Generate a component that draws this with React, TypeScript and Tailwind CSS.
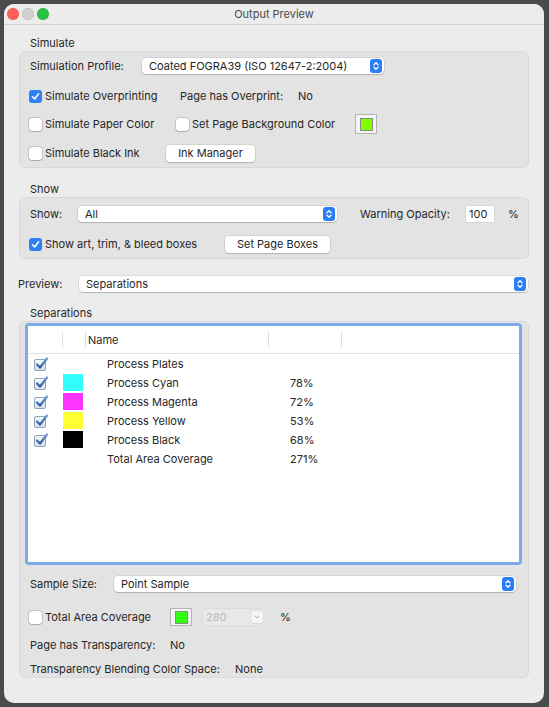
import React from "react";

const Stepper = () => (
  <span className="ml-auto mr-[2px] flex h-[14px] w-[12px] items-center justify-center rounded-[3px] bg-[#2b7ef6]">
    <svg width="8" height="10" viewBox="0 0 8 10" fill="none">
      <path d="M2 3.8 L4 1.8 L6 3.8" stroke="white" strokeWidth="1.3" strokeLinecap="round" strokeLinejoin="round" />
      <path d="M2 6.2 L4 8.2 L6 6.2" stroke="white" strokeWidth="1.3" strokeLinecap="round" strokeLinejoin="round" />
    </svg>
  </span>
);

const Popup = ({ label, className }: { label: string; className?: string }) => (
  <div
    className={
      "flex h-[16px] items-center rounded-[4px] bg-white pl-[7px] shadow-[0_0_0_0.5px_rgba(0,0,0,0.14),0_1px_1px_rgba(0,0,0,0.16)] " +
      (className || "")
    }
  >
    <span>{label}</span>
    <Stepper />
  </div>
);

const Button = ({ label, className }: { label: string; className?: string }) => (
  <div
    className={
      "flex h-[17px] items-center justify-center rounded-[4px] bg-white shadow-[0_0_0_0.5px_rgba(0,0,0,0.14),0_1px_1px_rgba(0,0,0,0.16)] " +
      (className || "")
    }
  >
    {label}
  </div>
);

const Checkbox = ({ checked }: { checked?: boolean }) =>
  checked ? (
    <span className="-ml-[1px] flex h-[13px] w-[13px] shrink-0 items-center justify-center rounded-[3px] bg-[#2f7ff6]">
      <svg width="9" height="9" viewBox="0 0 9 9" fill="none">
        <path d="M1.5 4.8 L3.6 7 L7.6 1.8" stroke="white" strokeWidth="1.6" strokeLinecap="round" strokeLinejoin="round" />
      </svg>
    </span>
  ) : (
    <span className="-ml-[1px] h-[13px] w-[13px] shrink-0 rounded-[3px] bg-white shadow-[0_0_0_0.5px_rgba(0,0,0,0.25),0_0.5px_1px_rgba(0,0,0,0.15)]" />
  );

const CheckLabel = ({ checked, label, className }: { checked?: boolean; label: string; className?: string }) => (
  <div className={"flex items-center gap-[3px] " + (className || "")}>
    <Checkbox checked={checked} />
    <span>{label}</span>
  </div>
);

const ColorWell = ({ color, className }: { color: string; className?: string }) => (
  <div className={"flex items-center justify-center border border-[#b4b4b4] bg-[#f4f4f4] " + (className || "")}>
    <div className="h-[13px] w-[13px] border border-[#8a8a8a]" style={{ background: color }} />
  </div>
);

const ListCheck = () => (
  <svg width="15" height="15" viewBox="0 0 15 15" fill="none">
    <defs>
      <linearGradient id="lc" x1="0" y1="0" x2="0" y2="1">
        <stop offset="0" stopColor="#f7f9fc" />
        <stop offset="1" stopColor="#d6dfea" />
      </linearGradient>
      <linearGradient id="lk" x1="0" y1="0" x2="0" y2="1">
        <stop offset="0" stopColor="#6a9ad6" />
        <stop offset="1" stopColor="#2b5a98" />
      </linearGradient>
    </defs>
    <rect x="0.5" y="3.5" width="11" height="11" rx="1.5" fill="url(#lc)" stroke="#8ea2bb" />
    <path d="M3 8.5 L6 11.5 L13 2.5" stroke="url(#lk)" strokeWidth="2.2" strokeLinecap="round" strokeLinejoin="round" />
  </svg>
);

const rows = [
  { name: "Process Plates", color: "", pct: "", check: true },
  { name: "Process Cyan", color: "#33ffff", pct: "78%", check: true },
  { name: "Process Magenta", color: "#ff33ff", pct: "72%", check: true },
  { name: "Process Yellow", color: "#ffff33", pct: "53%", check: true },
  { name: "Process Black", color: "#000000", pct: "68%", check: true },
  { name: "Total Area Coverage", color: "", pct: "271%", check: false },
];

export default function App() {
  return (
    <div className="h-[707px] w-[549px] bg-[#4b4b4b] pl-[4px] pt-[4px] font-[Inter,sans-serif] text-[11px] leading-[16px] text-[#262626]">
      <div className="flex h-[699px] w-[540px] flex-col overflow-hidden rounded-[10px] bg-[#ececec]">
        {/* Title bar */}
        <div className="grid h-[21px] shrink-0 grid-cols-[1fr_auto_1fr] items-center border-b border-[#d3d3d3] bg-[#ececec]">
          <div className="flex items-center gap-[3px] pl-[3px]">
            <span className="h-[12px] w-[12px] rounded-full bg-[#fe5f57] shadow-[inset_0_0_0_0.5px_rgba(0,0,0,0.15)]" />
            <span className="h-[12px] w-[12px] rounded-full bg-[#cfcfcf] shadow-[inset_0_0_0_0.5px_rgba(0,0,0,0.12)]" />
            <span className="h-[12px] w-[12px] rounded-full bg-[#29c13f] shadow-[inset_0_0_0_0.5px_rgba(0,0,0,0.15)]" />
          </div>
          <div className="text-[#4b4b4b]">Output Preview</div>
          <div />
        </div>

        <div className="px-[15px]">
          {/* Simulate */}
          <div className="mt-[10px] h-[16px] pl-[11px]">Simulate</div>
          <div className="rounded-[6px] border border-[#d9d9d9] bg-[#e3e3e3] pb-[5px] pl-[10px] pt-[5px]">
            <div className="flex h-[18px] items-center">
              <span className="w-[112px]">Simulation Profile:</span>
              <Popup label="Coated FOGRA39 (ISO 12647-2:2004)" className="w-[242px]" />
            </div>
            <div className="mt-[12px] flex h-[18px] items-center">
              <CheckLabel checked label="Simulate Overprinting" className="w-[150px]" />
              <span className="w-[118px]">Page has Overprint:</span>
              <span>No</span>
            </div>
            <div className="mt-[9px] flex h-[20px] items-center">
              <CheckLabel label="Simulate Paper Color" className="w-[147px]" />
              <CheckLabel label="Set Page Background Color" className="w-[178px]" />
              <ColorWell color="#80ff00" className="h-[20px] w-[22px]" />
            </div>
            <div className="mt-[10px] flex h-[18px] items-center">
              <CheckLabel label="Simulate Black Ink" className="w-[136px]" />
              <Button label="Ink Manager" className="w-[89px]" />
            </div>
          </div>

          {/* Show */}
          <div className="mt-[13px] h-[16px] pl-[11px]">Show</div>
          <div className="rounded-[6px] border border-[#d9d9d9] bg-[#e3e3e3] pb-[5px] pl-[10px] pt-[7px]">
            <div className="flex h-[18px] items-center">
              <span className="w-[48px]">Show:</span>
              <Popup label="All" className="w-[259px]" />
              <span className="ml-[23px] w-[106px]">Warning Opacity:</span>
              <div className="flex h-[16px] w-[28px] items-center bg-white pl-[3px] shadow-[0_0_0_0.5px_rgba(0,0,0,0.12)]">100</div>
              <span className="ml-[14px]">%</span>
            </div>
            <div className="mt-[12px] flex h-[18px] items-center">
              <CheckLabel checked label="Show art, trim, & bleed boxes" className="w-[195px]" />
              <Button label="Set Page Boxes" className="w-[105px]" />
            </div>
          </div>

          {/* Preview */}
          <div className="-ml-[1px] mt-[16px] flex h-[18px] items-center">
            <span className="w-[61px]">Preview:</span>
            <Popup label="Separations" className="w-[449px]" />
          </div>

          {/* Separations */}
          <div className="mt-[12px] h-[16px] pl-[11px]">Separations</div>
          <div className="rounded-[6px] border border-[#d9d9d9] bg-[#e3e3e3] pl-[5px] pt-[1px]">
            <div className="h-[242px] w-[497px] rounded-[4px] border-[3px] border-[#7faae9] bg-white">
              <div className="flex h-[28px] items-center border-b border-[#e2e2e2]">
                <div className="w-[34px]" />
                <div className="h-[15px] w-[23px] border-l border-[#dcdcdc]" />
                <div className="flex h-[15px] w-[183px] items-center border-l border-[#dcdcdc] pl-[2px]">Name</div>
                <div className="h-[15px] w-[73px] border-l border-[#dcdcdc]" />
                <div className="h-[15px] flex-1 border-l border-[#dcdcdc]" />
              </div>
              {rows.map((r) => (
                <div key={r.name} className="flex h-[19px] items-center">
                  <div className="flex w-[34px] pl-[6px]">{r.check && <ListCheck />}</div>
                  <div className="w-[23px] pl-[1px]">
                    {r.color && <div className="h-[17px] w-[20px]" style={{ background: r.color }} />}
                  </div>
                  <div className="w-[183px] pl-[22px]">{r.name}</div>
                  <div className="w-[73px] pl-[22px]">{r.pct}</div>
                </div>
              ))}
            </div>

            <div className="pl-[5px]">
              <div className="mt-[10px] flex h-[18px] items-center">
                <span className="w-[84px]">Sample Size:</span>
                <Popup label="Point Sample" className="w-[402px]" />
              </div>
              <div className="mt-[14px] flex h-[20px] items-center">
                <CheckLabel label="Total Area Coverage" className="w-[140px]" />
                <ColorWell color="#33ff11" className="h-[18px] w-[22px]" />
                <div className="ml-[11px] flex h-[16px] w-[62px] items-center rounded-[4px] bg-[#e9e9e9] pl-[3px] text-[#b9b9b9] shadow-[0_0_0_0.5px_rgba(0,0,0,0.06)]">
                  <span>280</span>
                  <span className="ml-auto mr-[2px] flex h-[12px] w-[12px] items-center justify-center rounded-[3px] bg-[#f6f6f6] shadow-[0_0_0_0.5px_rgba(0,0,0,0.1)]">
                    <svg width="6" height="4" viewBox="0 0 6 4" fill="none">
                      <path d="M1 1 L3 3 L5 1" stroke="#a8a8a8" strokeWidth="1" strokeLinecap="round" />
                    </svg>
                  </span>
                </div>
                <span className="ml-[15px]">%</span>
              </div>
              <div className="mt-[10px] flex h-[16px] items-center">
                <span className="w-[140px]">Page has Transparency:</span>
                <span>No</span>
              </div>
              <div className="mt-[8px] flex h-[16px] items-center">
                <span className="w-[205px]">Transparency Blending Color Space:</span>
                <span>None</span>
              </div>
            </div>
          </div>
        </div>
      </div>
    </div>
  );
}
